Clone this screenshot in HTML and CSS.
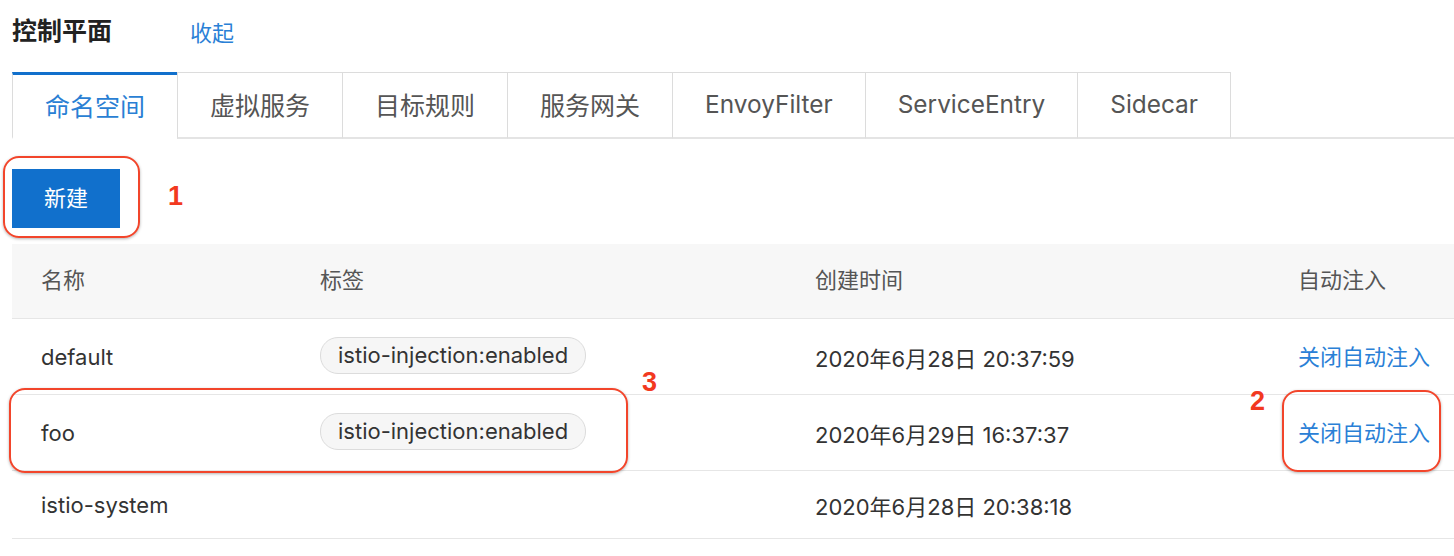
FILE: index.html
```html
<!DOCTYPE html>
<html lang="zh-CN">
<head>
<meta charset="utf-8">
<title>控制平面</title>
<link rel="stylesheet" href="styles.css">
</head>
<body>
<div class="page">
  <div class="header">
    <h1 class="title">控制平面</h1>
    <a class="collapse">收起</a>
  </div>
  <div class="tabs">
    <div class="tab active">命名空间</div>
    <div class="tab">虚拟服务</div>
    <div class="tab">目标规则</div>
    <div class="tab">服务网关</div>
    <div class="tab latin">EnvoyFilter</div>
    <div class="tab latin">ServiceEntry</div>
    <div class="tab latin last">Sidecar</div>
  </div>
  <div class="toolbar">
    <button class="btn-primary">新建</button>
  </div>
  <div class="table">
    <div class="row head">
      <div class="cell">名称</div>
      <div class="cell">标签</div>
      <div class="cell">创建时间</div>
      <div class="cell">自动注入</div>
    </div>
    <div class="row">
      <div class="cell">default</div>
      <div class="cell"><span class="tag">istio-injection:enabled</span></div>
      <div class="cell">2020年6月28日 20:37:59</div>
      <div class="cell cjk"><a class="link">关闭自动注入</a></div>
    </div>
    <div class="row">
      <div class="cell">foo</div>
      <div class="cell"><span class="tag">istio-injection:enabled</span></div>
      <div class="cell">2020年6月29日 16:37:37</div>
      <div class="cell cjk"><a class="link">关闭自动注入</a></div>
    </div>
    <div class="row short">
      <div class="cell">istio-system</div>
      <div class="cell"></div>
      <div class="cell">2020年6月28日 20:38:18</div>
      <div class="cell"></div>
    </div>
  </div>

  <div class="mark mark-1"></div>
  <div class="num num-1">1</div>
  <div class="mark mark-3"></div>
  <div class="num num-3">3</div>
  <div class="mark mark-2"></div>
  <div class="num num-2">2</div>
</div>
</body>
</html>
```
FILE: styles.css
```css
html, body {
  margin: 0;
  padding: 0;
  background: #fff;
}
body {
  font-family: Inter, "Noto Sans CJK SC", sans-serif;
  color: #333;
  width: 1454px;
  height: 556px;
  overflow: hidden;
}
.page {
  position: relative;
  padding-left: 12px;
  height: 556px;
  box-sizing: border-box;
}
.header {
  display: flex;
  align-items: baseline;
  height: 72px;
  padding-top: 13px;
  box-sizing: border-box;
}
.title {
  margin: 0;
  font-size: 25px;
  line-height: 36px;
  font-weight: 700;
  color: #222;
}
.collapse {
  margin-left: 78px;
  font-size: 22px;
  line-height: 36px;
  color: #2a80d6;
  position: relative;
  top: 1px;
}
.tabs {
  display: flex;
  height: 65px;
  border-bottom: 2px solid #e4e4e4;
}
.tab {
  margin-bottom: -2px;
  padding: 0 32px 2px;
  box-sizing: content-box;
  display: flex;
  align-items: center;
  border-top: 1px solid #dcdcdc;
  border-left: 1px solid #dcdcdc;
  border-bottom: 2px solid #e4e4e4;
  font-size: 25px;
  color: #555;
  background: #fff;
  height: 62px;
}
.tab.latin {
  font-size: 24.4px;
}
.tab.last {
  border-right: 1px solid #dcdcdc;
}
.tab.active {
  border-top: 3px solid #1170cc;
  border-bottom-color: #fff;
  color: #2a7fd4;
  height: 60px;
}
.toolbar {
  padding-top: 30px;
  height: 105px;
  box-sizing: border-box;
}
.btn-primary {
  width: 108px;
  height: 59px;
  border: none;
  background: #1170cc;
  color: #fff;
  font-family: Inter, "Noto Sans CJK SC", sans-serif;
  font-size: 22px;
  padding: 0 0 5px;
}
.table {
  width: 1442px;
}
.row {
  display: grid;
  grid-template-columns: 279px 495px 483px 1fr;
  height: 76px;
  box-sizing: border-box;
  border-bottom: 1px solid #e6e6e6;
  font-size: 22px;
}
.row.head {
  height: 75px;
  background: #f7f7f7;
  color: #555;
}
.row.head .cell {
  padding-bottom: 6px;
}
.row.short {
  height: 68px;
}
.cell {
  display: flex;
  align-items: center;
  padding-left: 29px;
  white-space: nowrap;
}
.cell.cjk {
  padding-bottom: 4px;
}
.tag {
  display: inline-flex;
  align-items: center;
  height: 35px;
  padding: 0 17px;
  border: 1px solid #dcdcdc;
  border-radius: 18px;
  background: #f6f6f6;
  margin-top: -3px;
  color: #333;
}
.link {
  color: #2a80d6;
}
.mark {
  position: absolute;
  border: 2px solid #f2452b;
  border-radius: 16px;
  box-shadow: 0 1px 3px rgba(0, 0, 0, 0.3);
}
.mark-1 { left: 3px; top: 156px; width: 133px; height: 78px; }
.mark-3 { left: 9px; top: 388px; width: 615px; height: 81px; }
.mark-2 { left: 1282px; top: 390px; width: 155px; height: 78px; }
.num {
  position: absolute;
  font-family: "Liberation Sans", sans-serif;
  font-weight: 700;
  font-size: 27px;
  line-height: 27px;
  color: #f2391f;
}
.num-1 { left: 168px; top: 183px; }
.num-3 { left: 642px; top: 369px; }
.num-2 { left: 1250px; top: 388px; }
```
